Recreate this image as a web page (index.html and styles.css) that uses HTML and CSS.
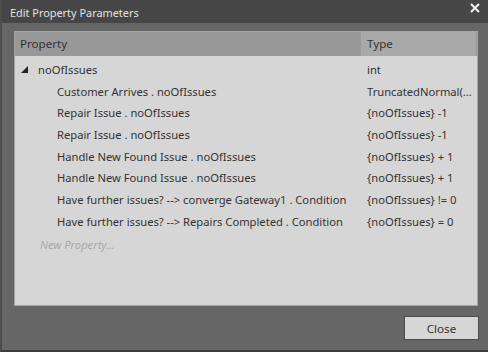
FILE: index.html
```html
<!DOCTYPE html>
<html lang="en">
<head>
    <meta charset="UTF-8">
    <title>Edit Property Parameters</title>
    <link rel="stylesheet" href="styles.css">
</head>
<body>

<div class="dialog">
    <div class="titlebar">
        <span class="title">Edit Property Parameters</span>
        <svg class="close-x" width="10" height="10" viewBox="0 0 10 10">
            <path d="M1 1 L9 9 M9 1 L1 9" stroke="#fff" stroke-width="1.8"/>
        </svg>
    </div>

    <div class="content">
        <div class="grid-panel">
            <div class="grid-header">
                <div class="col-prop">Property</div>
                <div class="col-type">Type</div>
            </div>
            <div class="grid-body">
                <div class="row">
                    <div class="col-prop parent">
                        <svg class="expander" width="7" height="7" viewBox="0 0 7 7"><polygon points="7,0 7,7 0,7" fill="#222"/></svg>
                        noOfIssues
                    </div>
                    <div class="col-type">int</div>
                </div>
                <div class="row">
                    <div class="col-prop child">Customer Arrives . noOfIssues</div>
                    <div class="col-type">TruncatedNormal(...</div>
                </div>
                <div class="row">
                    <div class="col-prop child">Repair Issue . noOfIssues</div>
                    <div class="col-type">{noOfIssues} -1</div>
                </div>
                <div class="row">
                    <div class="col-prop child">Repair Issue . noOfIssues</div>
                    <div class="col-type">{noOfIssues} -1</div>
                </div>
                <div class="row">
                    <div class="col-prop child">Handle New Found Issue . noOfIssues</div>
                    <div class="col-type">{noOfIssues} + 1</div>
                </div>
                <div class="row">
                    <div class="col-prop child">Handle New Found Issue . noOfIssues</div>
                    <div class="col-type">{noOfIssues} + 1</div>
                </div>
                <div class="row">
                    <div class="col-prop child">Have further issues? --&gt; converge Gateway1 . Condition</div>
                    <div class="col-type">{noOfIssues} != 0</div>
                </div>
                <div class="row">
                    <div class="col-prop child">Have further issues? --&gt; Repairs Completed . Condition</div>
                    <div class="col-type">{noOfIssues} = 0</div>
                </div>
                <div class="row new-row">
                    <div class="col-prop">New Property...</div>
                </div>
            </div>
        </div>
    </div>

    <div class="footer">
        <button class="close-btn">Close</button>
    </div>
</div>

</body>
</html>
```

FILE: styles.css
```css
body {
    margin: 0;
    background-color: #666;
    font-family: "Noto Sans", "Open Sans", sans-serif;
    font-size: 11.2px;
}

.dialog {
    width: 488px;
    height: 352px;
    display: flex;
    flex-direction: column;
    box-sizing: border-box;
    border-left: 2px solid #4e4e4e;
    border-bottom: 2px solid #3c3c3c;
}

.titlebar {
    height: 23px;
    background-color: #464646;
    display: flex;
    align-items: center;
    justify-content: space-between;
    padding: 0 8px 0 8px;
    color: #e2e2e2;
}

.title {
    margin-top: 2px;
    font-size: 10.9px;
}

.close-x {
    margin-top: -8px;
}

.content {
    padding: 8px 10px 0 12px;
}

.grid-panel {
    height: 275px;
    box-sizing: border-box;
    border: 1px solid #a4a4a4;
    background-color: #d6d6d6;
    color: #333;
}

.grid-header {
    display: flex;
    height: 24px;
    line-height: 24px;
    background-color: #989898;
    font-size: 11.6px;
}

.grid-header .col-prop {
    width: 346px;
    padding-left: 5px;
    box-sizing: border-box;
}

.grid-header .col-type {
    flex: 1;
    background-color: #a9a9a9;
    padding-left: 6px;
    margin-right: 1px;
}

.grid-body {
    padding-top: 3px;
}

.row {
    display: flex;
    height: 21.7px;
    line-height: 21.7px;
}

.row .col-prop {
    width: 346px;
    box-sizing: border-box;
    white-space: nowrap;
}

.row .col-type {
    flex: 1;
    padding-left: 6px;
    white-space: nowrap;
}

.parent {
    padding-left: 6px;
    display: flex;
    align-items: center;
}

.expander {
    margin-right: 10px;
}

.child {
    padding-left: 42px;
}

.new-row {
    margin-top: 1px;
}

.new-row .col-prop {
    padding-left: 25px;
    font-style: italic;
    color: #a8a8a8;
}

.footer {
    display: flex;
    justify-content: flex-end;
    padding: 10px 9px 0 0;
}

.close-btn {
    width: 75px;
    height: 24px;
    background-color: #d6d6d6;
    border: 1px solid #4a4a4a;
    color: #333;
    font-family: "Noto Sans", "Open Sans", sans-serif;
    font-size: 11.6px;
    padding: 0;
}
```
